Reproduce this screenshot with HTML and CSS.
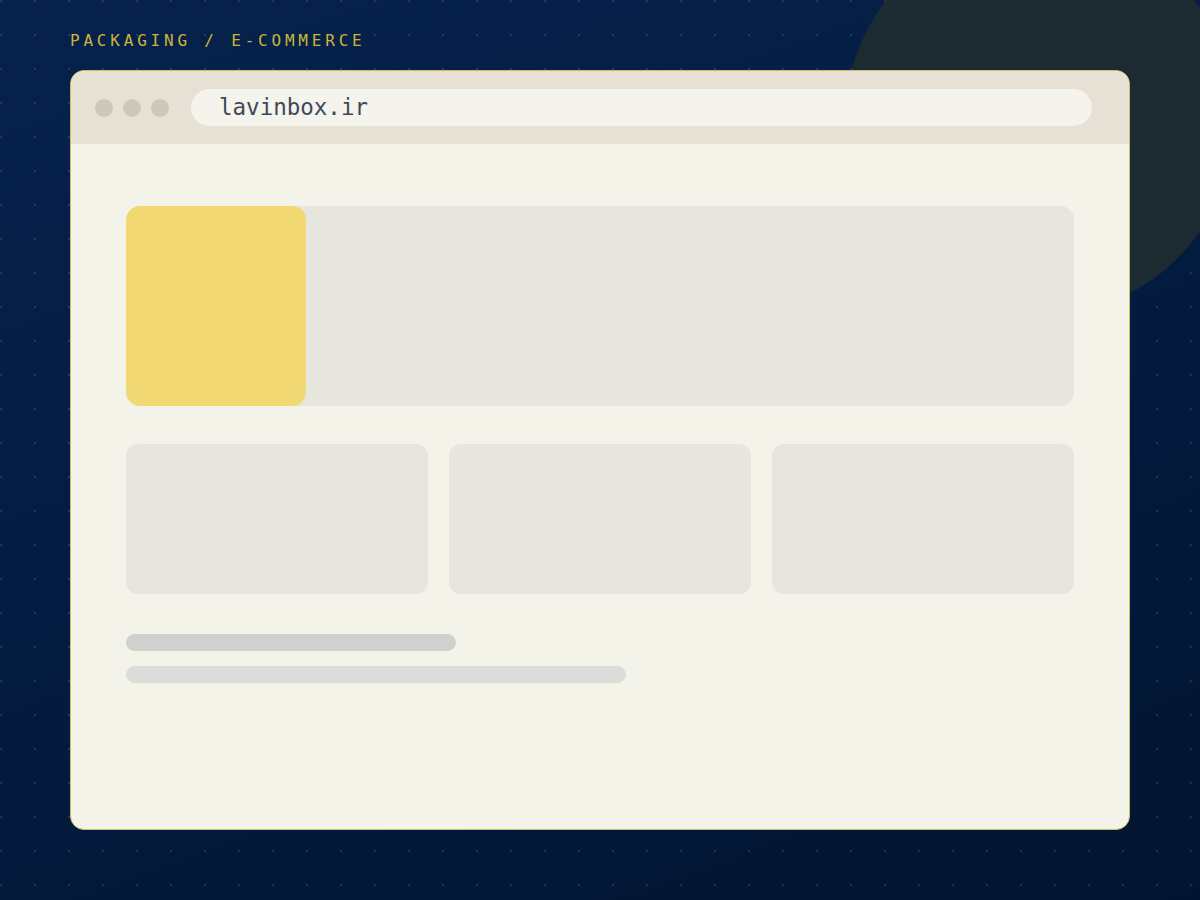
FILE: index.html
```html
<!DOCTYPE html>
<html lang="en">
<head>
  <meta charset="UTF-8" />
  <meta name="viewport" content="width=device-width, initial-scale=1.0" />
  <title>lavinbox.ir - Packaging / E-commerce</title>
  <link rel="stylesheet" href="styles.css">
</head>
<body>
  <div class="stage">
    <div class="orb"></div>

    <p class="tag">PACKAGING / E-COMMERCE</p>

    <div class="window">
      <div class="titlebar">
        <div class="lights">
          <span></span><span></span><span></span>
        </div>
        <div class="address">lavinbox.ir</div>
      </div>

      <div class="page">
        <div class="hero">
          <div class="hero-img"></div>
        </div>
        <div class="cards">
          <div class="card"></div>
          <div class="card"></div>
          <div class="card"></div>
        </div>
        <div class="lines">
          <div class="line line-dark"></div>
          <div class="line line-light"></div>
        </div>
      </div>
    </div>
  </div>
</body>
</html>
```

FILE: styles.css
```css
html, body { margin: 0; padding: 0; }
body { width: 1200px; height: 900px; overflow: hidden; font-family: "DejaVu Sans Mono", "Liberation Mono", monospace; }

.stage {
  position: relative;
  width: 1200px; height: 900px;
  box-sizing: border-box;
  padding: 30px 70px 0;
  background-color: #03183a;
  background-image:
    radial-gradient(circle, rgba(150,170,210,0.18) 1px, transparent 1.6px),
    linear-gradient(160deg, #06224c 0%, #041c42 45%, #021530 100%);
  background-size: 34px 34px, 100% 100%;
  background-position: -16px -16px, 0 0;
  overflow: hidden;
}

/* decorative circle behind the window */
.orb {
  position: absolute;
  left: 845px; top: -75px;
  width: 390px; height: 390px;
  border-radius: 50%;
  background: #1c2a31;
}

.tag {
  position: relative;
  margin: 0 0 18px;
  height: 22px;
  line-height: 22px;
  font-size: 16px;
  letter-spacing: 3.8px;
  color: #cbb43c;
}

.window {
  position: relative;
  width: 1060px; height: 760px;
  box-sizing: border-box;
  background: #f4f3ea;
  border: 1px solid #cdbd66;
  border-radius: 14px;
  overflow: hidden;
}

.titlebar {
  display: flex;
  align-items: center;
  gap: 22px;
  height: 73px;
  padding: 0 37px 0 24px;
  background: #e6e1d4;
}
.lights { display: flex; gap: 10px; }
.lights span { width: 18px; height: 18px; border-radius: 50%; background: #cdc8bb; }

.address {
  flex: 1;
  height: 37px;
  line-height: 37px;
  padding: 0 28px;
  border-radius: 19px;
  background: #f4f3ec;
  font-size: 22.5px;
  color: #3e4859;
}

.page { padding: 62px 55px 0; }

.hero {
  height: 200px;
  border-radius: 14px;
  background: #e6e6de;
  overflow: hidden;
}
.hero-img { width: 180px; height: 100%; border-radius: 14px; background: #f1d872; }

.cards {
  display: grid;
  grid-template-columns: repeat(3, 1fr);
  gap: 21px;
  margin-top: 38px;
}
.card { height: 150px; border-radius: 12px; background: #e6e6de; }

.lines { display: flex; flex-direction: column; gap: 15px; margin-top: 40px; }
.line { height: 17px; border-radius: 9px; }
.line-dark { width: 330px; background: #d0d0cc; }
.line-light { width: 500px; background: #dcdcd8; }
```
